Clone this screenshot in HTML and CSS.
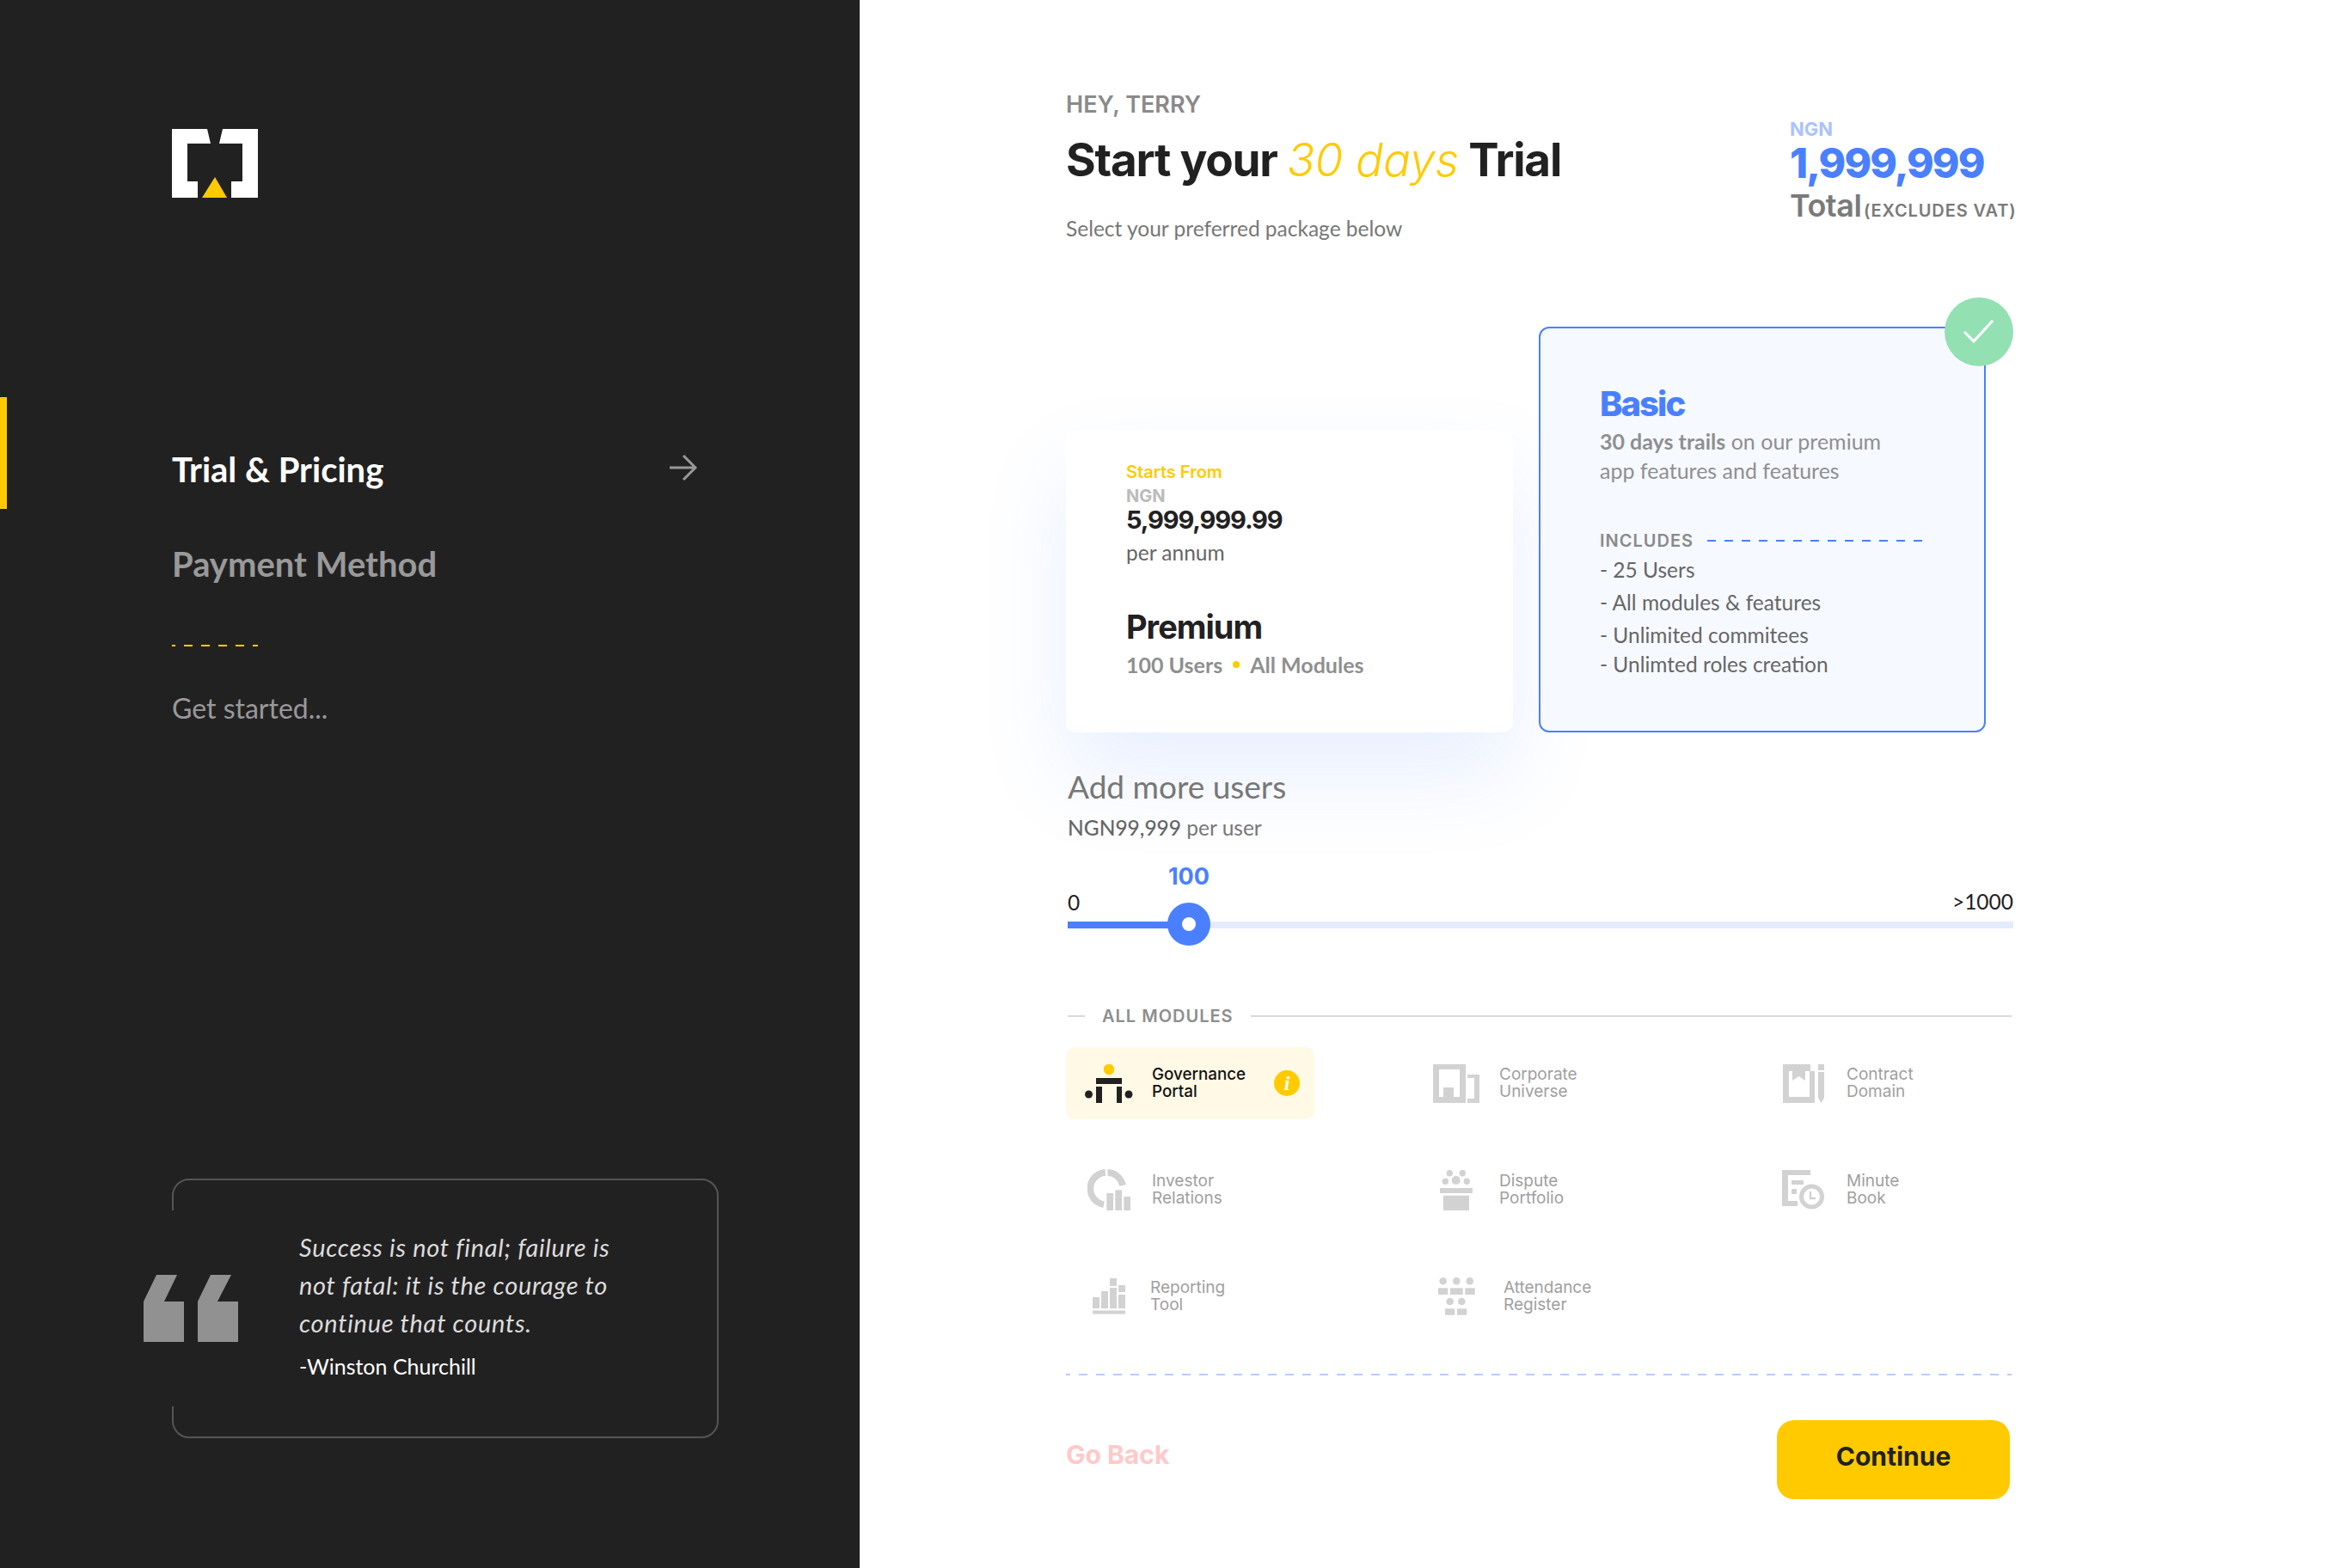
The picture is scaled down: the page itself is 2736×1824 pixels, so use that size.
FILE: index.html
```html
<!DOCTYPE html>
<html>
<head>
	<meta charset="utf-8">
	<title>Trial &amp; Pricing</title>
	<link rel="stylesheet" href="styles.css">
</head>
<body>
<div class="page">
	<aside class="side">
		<svg class="logo" width="100" height="80" viewBox="0 0 100 80">
			<polygon fill="#fff" points="0,0 41,0 45,17 18,17 18,61 30,61 30,80 0,80"/>
			<polygon fill="#fff" points="100,0 59,0 55,17 82,17 82,61 69,61 69,80 100,80"/>
			<polygon fill="#ffcb00" points="50,56 64,80 35,80"/>
		</svg>
		<div class="step step-active">
			<span>Trial &amp; Pricing</span>
			<svg class="arrow" width="32" height="32" viewBox="0 0 32 32" fill="none" stroke="#999" stroke-width="3">
				<path d="M0 16H30M16 2L30 16L16 30"/>
			</svg>
		</div>
		<div class="step step-next">Payment Method</div>
		<div class="side-dash"></div>
		<p class="side-note">Get started...</p>
		<div class="quote">
			<svg class="quote-mark" width="110" height="78" viewBox="0 0 110 78" fill="#919191">
				<polygon points="15,0 39,0 24,31 47,31 47,78 0,78 0,31"/>
				<polygon points="78,0 102,0 86,31 110,31 110,78 63,78 63,31"/>
			</svg>
			<p class="quote-text">Success is not final; failure is<br>not fatal: it is the courage to<br>continue that counts.</p>
			<p class="quote-author">-Winston Churchill</p>
		</div>
	</aside>

	<main class="main">
		<header class="head">
			<div>
				<p class="hey">HEY, TERRY</p>
				<h1 class="title">Start your <em>30 days</em> Trial</h1>
				<p class="sub">Select your preferred package below</p>
			</div>
			<div class="total">
				<p class="total-cur">NGN</p>
				<p class="total-num">1,999,999</p>
				<p class="total-label">Total <small>(EXCLUDES VAT)</small></p>
			</div>
		</header>

		<section class="plans">
			<div class="plan plan-premium">
				<p class="starts">Starts From</p>
				<p class="cur">NGN</p>
				<p class="price">5,999,999.99</p>
				<p class="per">per annum</p>
				<h2 class="plan-name">Premium</h2>
				<p class="plan-meta">100 Users<i class="dot"></i>All Modules</p>
			</div>
			<div class="plan plan-basic">
				<span class="tick">
					<svg width="36" height="28" viewBox="0 0 36 28" fill="none" stroke="#fff" stroke-width="3">
						<path d="M1 14L12 25L34 1"/>
					</svg>
				</span>
				<h2 class="basic-name">Basic</h2>
				<p class="basic-desc"><b>30 days trails</b> on our premium<br>app features and features</p>
				<div class="includes"><span>INCLUDES</span><i></i></div>
				<ul class="inc-list">
					<li>- 25 Users</li>
					<li>- All modules &amp; features</li>
					<li>- Unlimited commitees</li>
					<li>- Unlimted roles creation</li>
				</ul>
			</div>
		</section>

		<section class="users">
			<h3 class="users-title">Add more users</h3>
			<p class="users-price"><b>NGN99,999</b> per user</p>
			<p class="slider-value">100</p>
			<div class="slider-ends"><span>0</span><span class="end-max">&gt;1000</span></div>
			<div class="track">
				<div class="track-fill"></div>
				<div class="thumb"></div>
			</div>
		</section>

		<div class="mod-head"><i></i><span>ALL MODULES</span><i></i></div>

		<section class="mods">
			<div class="mod mod-on">
				<span class="mod-icon">
					<svg width="56" height="45" viewBox="0 0 56 45">
						<circle cx="28" cy="6" r="6.2" fill="#ffcb00"/>
						<g fill="#222122">
							<rect x="13" y="16" width="30" height="7"/>
							<rect x="13" y="26" width="7" height="19"/>
							<rect x="37" y="26" width="6" height="19"/>
							<circle cx="4.5" cy="35" r="4.5"/>
							<circle cx="51" cy="35" r="4.5"/>
						</g>
					</svg>
				</span>
				<span class="mod-label">Governance<br>Portal</span>
				<span class="info">i</span>
			</div>
			<div class="mod">
				<span class="mod-icon">
					<svg class="ico" width="54" height="45" viewBox="0 0 54 45">
						<path fill-rule="evenodd" d="M0 0H38V45H0ZM7 6V38H12V27H24V38H31V6Z"/>
						<path d="M40 12H54V45H40V40H48V16H40Z"/>
					</svg>
				</span>
				<span class="mod-label">Corporate<br>Universe</span>
			</div>
			<div class="mod">
				<span class="mod-icon">
					<svg class="ico" width="49" height="45" viewBox="0 0 49 45">
						<path d="M0 0H32V8H26V19L18.5 14L11 19V8H7V38H31V8H37V45H0Z"/>
						<path d="M41 0H48V7H41ZM41 9H48V39L44.5 45L41 39Z"/>
					</svg>
				</span>
				<span class="mod-label">Contract<br>Domain</span>
			</div>
			<div class="mod">
				<span class="mod-icon">
					<svg class="ico" width="50" height="48" viewBox="0 0 50 48">
						<path fill="none" stroke="#d2d2d2" stroke-width="7.7" d="M20.8 3.9A18.8 18.8 0 0 0 19 41.2M23.5 3.9A18.8 18.8 0 0 1 41 19"/>
						<rect x="22.3" y="28" width="7.7" height="20"/>
						<rect x="32.3" y="24.3" width="7.7" height="23.7"/>
						<rect x="42.3" y="32" width="7.7" height="16"/>
					</svg>
				</span>
				<span class="mod-label">Investor<br>Relations</span>
			</div>
			<div class="mod">
				<span class="mod-icon">
					<svg class="ico" width="38" height="47" viewBox="0 0 38 47">
						<circle cx="11.3" cy="3.7" r="3.7"/>
						<circle cx="26.3" cy="3.7" r="3.7"/>
						<circle cx="6.3" cy="13.3" r="3.7"/>
						<circle cx="18.7" cy="12" r="5"/>
						<circle cx="31.3" cy="13.3" r="3.7"/>
						<rect x="0" y="21" width="38" height="6"/>
						<rect x="4" y="29.7" width="30" height="17.3"/>
					</svg>
				</span>
				<span class="mod-label">Dispute<br>Portfolio</span>
			</div>
			<div class="mod">
				<span class="mod-icon">
					<svg class="ico" width="50" height="46" viewBox="0 0 50 46">
						<path d="M0 0H33V6H7V36H18V42H0Z"/>
						<rect x="11" y="12" width="14" height="5"/>
						<rect x="11" y="22" width="6" height="6"/>
						<circle cx="34.5" cy="31" r="12" fill="none" stroke="#d2d2d2" stroke-width="5"/>
						<path fill="none" stroke="#d2d2d2" stroke-width="2.5" d="M33 25V33H39"/>
					</svg>
				</span>
				<span class="mod-label">Minute<br>Book</span>
			</div>
			<div class="mod">
				<span class="mod-icon">
					<svg class="ico" width="38" height="42" viewBox="0 0 38 42">
						<rect x="0" y="22" width="8" height="13"/>
						<rect x="10" y="15" width="8" height="20"/>
						<rect x="20" y="0" width="8" height="9"/>
						<rect x="20" y="11" width="8" height="24"/>
						<rect x="30" y="8" width="8" height="8"/>
						<rect x="30" y="19" width="8" height="16"/>
						<rect x="0" y="37.5" width="38" height="4"/>
					</svg>
				</span>
				<span class="mod-label label-tight">Reporting<br>Tool</span>
			</div>
			<div class="mod">
				<span class="mod-icon">
					<svg class="ico" width="43" height="44" viewBox="0 0 43 44">
						<circle cx="5.7" cy="4.3" r="4.3"/>
						<circle cx="21.3" cy="4.3" r="4.3"/>
						<circle cx="36.7" cy="4.3" r="4.3"/>
						<rect x="0" y="12.3" width="11.3" height="7.7"/>
						<rect x="14" y="12.3" width="14.7" height="7.7"/>
						<rect x="31.3" y="12.3" width="11.4" height="7.7"/>
						<circle cx="13.7" cy="28" r="4.3"/>
						<circle cx="27.3" cy="28" r="4.3"/>
						<rect x="8" y="36.3" width="11.3" height="7.4"/>
						<rect x="22" y="36.3" width="11.3" height="7.4"/>
					</svg>
				</span>
				<span class="mod-label label-wide">Attendance<br>Register</span>
			</div>
		</section>

		<div class="divider"></div>

		<footer class="actions">
			<a class="back">Go Back</a>
			<a class="continue">Continue</a>
		</footer>
	</main>
</div>
</body>
</html>
```

FILE: styles.css
```css
* {
	box-sizing: border-box;
}
body {
	margin: 0;
	background: #fff;
	font-family: "Lato", sans-serif;
}
p, h1, h2, h3, ul {
	margin: 0;
	padding: 0;
}
.page {
	display: flex;
	width: 2736px;
	height: 1824px;
	overflow: hidden;
}

/* left panel */
.side {
	width: 1000px;
	flex: none;
	padding-top: 150px;
	background: #222122;
}
.logo {
	display: block;
	margin-left: 200px;
}
.step {
	font-size: 40px;
	font-weight: 700;
	line-height: 48px;
	padding-left: 200px;
}
.step-active {
	display: flex;
	justify-content: space-between;
	height: 130px;
	margin-top: 232px;
	padding: 60px 189px 0 192px;
	border-left: 8px solid #ffcb00;
	color: #fff;
}
.arrow {
	margin-top: 6px;
}
.step-next {
	margin-top: 40px;
	color: #999;
}
.side-dash {
	width: 100px;
	height: 2px;
	margin: 70px 0 0 200px;
	background: repeating-linear-gradient(90deg, #ffcb00 0 4px, transparent 4px 14px, #ffcb00 14px 20px);
}
.side-note {
	margin: 52px 0 0 200px;
	font-size: 32px;
	line-height: 40px;
	color: #999;
}
.quote {
	position: relative;
	width: 636px;
	height: 302px;
	margin: 527px 0 0 200px;
	padding: 56px 0 0 146px;
	border: 2px solid #555;
	border-radius: 20px;
}
.quote::before {
	content: "";
	position: absolute;
	left: -3px;
	top: 35px;
	width: 4px;
	height: 228px;
	background: #222122;
}
.quote-mark {
	position: absolute;
	left: -35px;
	top: 110px;
}
.quote-text {
	font-size: 29px;
	font-style: italic;
	line-height: 44px;
	letter-spacing: .7px;
	color: #ddd;
}
.quote-author {
	margin-top: 11px;
	font-size: 25px;
	line-height: 34px;
	color: #fff;
}

/* right panel */
.main {
	flex: 1;
	padding: 105px 394px 0 240px;
}
.head {
	display: flex;
	justify-content: space-between;
}
.hey {
	font-family: "Inter", sans-serif;
	font-size: 27px;
	font-weight: 600;
	line-height: 34px;
	color: #8a8a8a;
}
.title {
	margin-top: 13px;
	font-family: "Inter", sans-serif;
	font-size: 53px;
	font-weight: 700;
	line-height: 68px;
	letter-spacing: -1.2px;
	color: #222122;
}
.title em {
	font-weight: 300;
	letter-spacing: 0;
	color: #ffcb00;
}
.sub {
	margin-top: 30px;
	font-size: 24.5px;
	line-height: 32px;
	color: #777;
}
.total {
	width: 260px;
	padding-top: 33px;
	font-family: "Inter", sans-serif;
}
.total-cur {
	font-size: 22px;
	font-weight: 700;
	line-height: 24px;
	color: #a9c3ff;
}
.total-num {
	margin-top: 2px;
	font-size: 48px;
	font-weight: 800;
	line-height: 52px;
	letter-spacing: -1.9px;
	color: #4a80ff;
}
.total-label {
	margin-top: 1px;
	font-size: 36px;
	font-weight: 600;
	line-height: 44px;
	letter-spacing: -.5px;
	color: #7a7a7a;
	white-space: nowrap;
}
.total-label small {
	margin-left: -6px;
	font-size: 20px;
	letter-spacing: .9px;
}

/* plan cards */
.plans {
	display: flex;
	align-items: flex-end;
	gap: 30px;
	margin-top: 98px;
}
.plan {
	width: 520px;
	border-radius: 12px;
}
.plan-premium {
	height: 352px;
	padding: 36px 0 0 70px;
	background: #fff;
	box-shadow: 0 50px 100px rgba(74, 128, 255, .13);
}
.starts {
	font-family: "Inter", sans-serif;
	font-size: 20px;
	font-weight: 600;
	line-height: 26px;
	color: #ffcb00;
}
.cur {
	margin-top: 3px;
	font-family: "Inter", sans-serif;
	font-size: 20px;
	font-weight: 700;
	line-height: 24px;
	color: #bbb;
}
.price {
	margin-top: -2px;
	font-family: "Inter", sans-serif;
	font-size: 29px;
	font-weight: 700;
	line-height: 36px;
	letter-spacing: -1.1px;
	color: #222122;
}
.per {
	margin-top: 4px;
	font-size: 24.5px;
	line-height: 32px;
	color: #666;
}
.plan-name {
	margin-top: 46px;
	font-family: "Inter", sans-serif;
	font-size: 38px;
	font-weight: 700;
	line-height: 48px;
	letter-spacing: -1px;
	color: #222122;
}
.plan-meta {
	display: flex;
	align-items: center;
	margin-top: 4px;
	font-size: 25px;
	font-weight: 700;
	line-height: 32px;
	color: #8f8f8f;
}
.dot {
	width: 8px;
	height: 8px;
	margin: 0 12px;
	border-radius: 50%;
	background: #ffcb00;
}
.plan-basic {
	position: relative;
	height: 472px;
	padding: 64px 0 0 69px;
	border: 2px solid #4a80ff;
	background: #f6f9ff;
}
.tick {
	position: absolute;
	top: -36px;
	right: -34px;
	display: flex;
	align-items: center;
	justify-content: center;
	width: 80px;
	height: 80px;
	border-radius: 50%;
	background: #93e1b3;
}
.basic-name {
	font-family: "Inter", sans-serif;
	font-size: 40px;
	font-weight: 800;
	line-height: 48px;
	letter-spacing: -2px;
	color: #4a80ff;
}
.basic-desc {
	margin-top: 2px;
	font-size: 25px;
	line-height: 34px;
	color: #8f8f8f;
}
.includes {
	display: flex;
	align-items: center;
	gap: 16px;
	margin-top: 53px;
	font-family: "Inter", sans-serif;
	font-size: 20px;
	font-weight: 600;
	line-height: 24px;
	letter-spacing: 1px;
	color: #8a8a8a;
}
.includes i {
	width: 254px;
	height: 2px;
	background: repeating-linear-gradient(90deg, #4a80ff 0 10px, transparent 10px 20px);
}
.inc-list {
	margin-top: 5px;
	list-style: none;
	font-size: 24.5px;
	line-height: 34px;
	color: #666;
}
.inc-list li {
	margin-bottom: 4px;
}
.inc-list li:nth-child(3) {
	margin-bottom: 0;
}

/* users slider */
.users {
	width: 1102px;
	padding-left: 2px;
}
.users-title {
	margin-top: 41px;
	font-size: 37px;
	font-weight: 400;
	line-height: 44px;
	color: #777;
}
.users-price {
	margin-top: 10px;
	font-size: 24.5px;
	line-height: 32px;
	color: #777;
}
.users-price b {
	font-weight: 500;
	color: #666;
}
.slider-value {
	width: 50px;
	margin: 25px 0 0 116px;
	font-family: "Inter", sans-serif;
	font-size: 27px;
	font-weight: 700;
	line-height: 32px;
	text-align: center;
	color: #4a80ff;
}
.slider-ends {
	display: flex;
	justify-content: space-between;
	margin-top: -1px;
	font-size: 24.5px;
	line-height: 30px;
	color: #222122;
}
.end-max {
	margin-top: -1px;
}
.track {
	position: relative;
	height: 8px;
	margin-top: 7px;
	background: #e3ebff;
}
.track-fill {
	width: 120px;
	height: 8px;
	background: #4a80ff;
}
.thumb {
	position: absolute;
	left: 116px;
	top: -22px;
	width: 50px;
	height: 50px;
	border: 17px solid #4a80ff;
	border-radius: 50%;
	background: #fff;
}

/* modules */
.mod-head {
	display: flex;
	align-items: center;
	gap: 20px;
	margin: 90px 2px 0 2px;
	font-family: "Inter", sans-serif;
	font-size: 20px;
	font-weight: 600;
	line-height: 24px;
	letter-spacing: 1px;
	color: #8e8e8e;
}
.mod-head i {
	width: 20px;
	height: 2px;
	background: #d9d9d9;
}
.mod-head i:last-child {
	flex: 1;
}
.mods {
	display: grid;
	grid-template-columns: repeat(3, 289px);
	grid-auto-rows: 84px;
	gap: 40px 115px;
	margin-top: 24px;
}
.mod {
	display: flex;
	align-items: center;
	border-radius: 10px;
}
.mod-on {
	background: #fff9e5;
}
.mod-icon {
	display: flex;
	align-items: center;
	justify-content: center;
	flex: none;
	width: 100px;
}
.ico {
	fill: #d2d2d2;
}
.mod-label {
	font-family: "Inter", sans-serif;
	font-size: 19px;
	line-height: 20px;
	color: #a0a0a0;
}
.mod-on .mod-label {
	font-size: 18.8px;
	font-weight: 500;
	color: #111;
}
.label-tight {
	margin-left: -2px;
}
.label-wide {
	margin-left: 5px;
}
.info {
	width: 30px;
	height: 30px;
	margin: 0 17px 0 auto;
	border-radius: 50%;
	background: #ffcb00;
	font-family: "Liberation Serif", serif;
	font-size: 24px;
	font-style: italic;
	font-weight: 700;
	line-height: 30px;
	text-align: center;
	color: #fff;
}
.divider {
	width: 1100px;
	height: 2px;
	margin-top: 48px;
	background: repeating-linear-gradient(90deg, #b8ccff 0 5px, transparent 5px 15px, #b8ccff 15px 20px);
}
.actions {
	display: flex;
	align-items: center;
	justify-content: space-between;
	width: 1098px;
	margin-top: 52px;
	font-family: "Inter", sans-serif;
	font-weight: 700;
}
.back {
	margin-bottom: 12px;
	font-size: 30px;
	color: #ffc9c9;
}
.continue {
	width: 271px;
	height: 92px;
	padding-bottom: 7px;
	border-radius: 20px;
	background: #ffcb00;
	font-size: 30px;
	line-height: 85px;
	text-align: center;
	color: #222122;
}
```
